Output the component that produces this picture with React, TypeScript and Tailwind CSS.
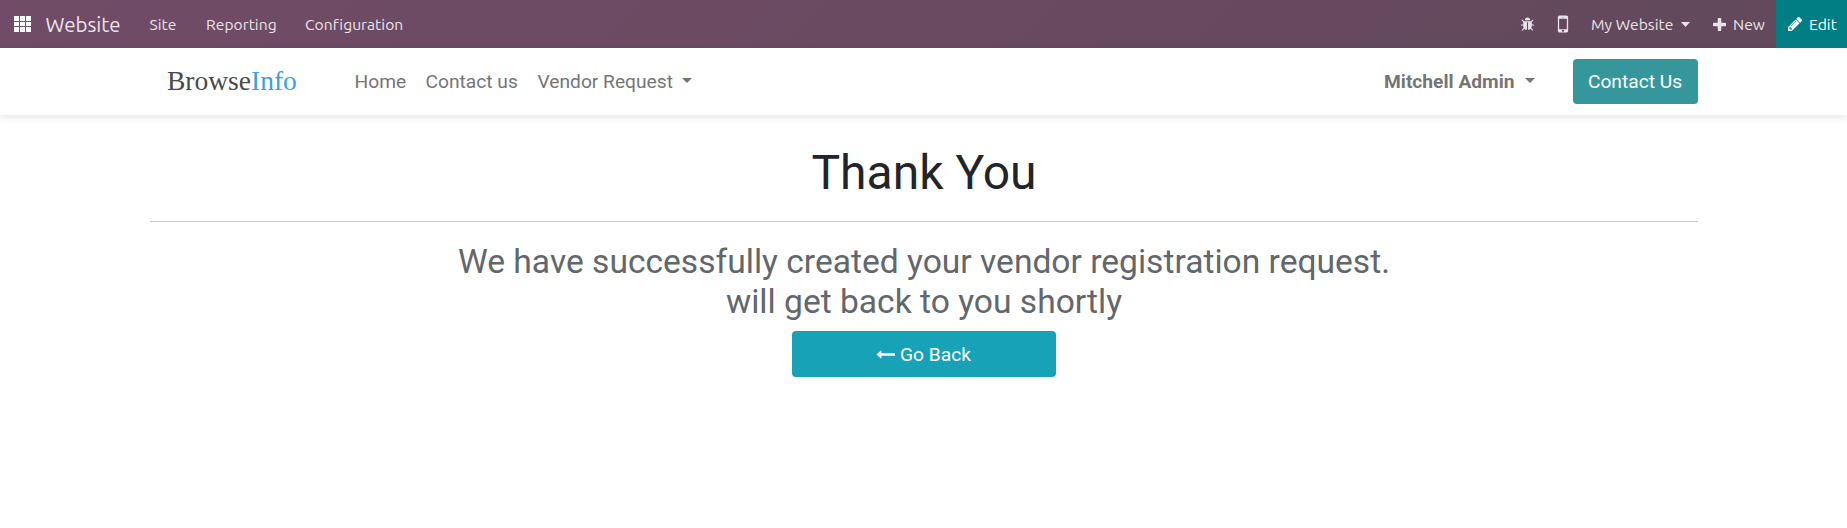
import React from "react";

const ICONS = {
  bug: "M1696 960q0 26-19 45t-45 19h-224q0 171-67 290l208 209q19 19 19 45t-19 45q-18 19-45 19t-45-19l-198-197q-5 5-15 13t-42 28.5-65 36.5-82 29-97 13v-896h-128v896q-51 0-101.5-13.5t-87-33-66-39-43.5-32.5l-15-14-183 207q-20 21-48 21-24 0-43-16-19-18-20.5-44.5t15.5-46.5l202-227q-58-114-58-274h-224q-26 0-45-19t-19-45 19-45 45-19h224v-294l-173-173q-19-19-19-45t19-45 45-19 45 19l173 173h844l173-173q19-19 45-19t45 19 19 45-19 45l-173 173v294h224q26 0 45 19t19 45zm-480-576h-640q0-133 93.5-226.5t226.5-93.5 226.5 93.5 93.5 226.5z",
  mobile: "M976 1408q0-33-23.5-56.5t-56.5-23.5-56.5 23.5-23.5 56.5 23.5 56.5 56.5 23.5 56.5-23.5 23.5-56.5zm208-160v-704q0-13-9.5-22.5t-22.5-9.5h-512q-13 0-22.5 9.5t-9.5 22.5v704q0 13 9.5 22.5t22.5 9.5h512q13 0 22.5-9.5t9.5-22.5zm-192-848q0-16-16-16h-160q-16 0-16 16t16 16h160q16 0 16-16zm288-16v1024q0 52-38 90t-90 38h-512q-52 0-90-38t-38-90v-1024q0-52 38-90t90-38h512q52 0 90 38t38 90z",
  plus: "M1600 736v192q0 40-28 68t-68 28h-416v416q0 40-28 68t-68 28h-192q-40 0-68-28t-28-68v-416h-416q-40 0-68-28t-28-68v-192q0-40 28-68t68-28h416v-416q0-40 28-68t68-28h192q40 0 68 28t28 68v416h416q40 0 68 28t28 68z",
  pencil: "M491 1536l91-91-235-235-91 91v107h128v128h107zm523-928q0-22-22-22-10 0-17 7l-542 542q-7 7-7 17 0 22 22 22 10 0 17-7l542-542q7-7 7-17zm-54-192l416 416-832 832h-416v-416zm683 96q0 53-37 90l-166 166-416-416 166-165q36-38 90-38 53 0 91 38l235 234q37 39 37 91z",
  arrow: "M1792 800v192q0 14-9 23t-23 9h-1248v224q0 21-19 29t-35-5l-384-350q-10-10-10-23 0-14 10-24l384-354q16-14 35-6 19 9 19 29v224h1248q14 0 23 9t9 23z",
};

function Icon({ name, className, viewBox = "0 0 1792 1792" }: { name: keyof typeof ICONS; className: string; viewBox?: string }) {
  return (
    <svg viewBox={viewBox} fill="currentColor" className={className} aria-hidden="true">
      <path d={ICONS[name]} />
    </svg>
  );
}

function Caret({ className }: { className: string }) {
  return (
    <svg viewBox="0 0 10 5" preserveAspectRatio="none" fill="currentColor" className={className} aria-hidden="true">
      <path d="M0 0h10L5 5z" />
    </svg>
  );
}

function SystemBar() {
  return (
    <nav className="flex h-12 items-center whitespace-nowrap bg-linear-[135deg,#714b67,#62495b] pl-[14px] font-['Ubuntu','Noto_Sans',sans-serif] text-[15.6px] tracking-[0.05px] text-[#eae4e9]">
      <div className="grid h-4 w-[17px] shrink-0 grid-cols-3 gap-px">
        {Array.from({ length: 9 }, (_, i) => (
          <span key={i} className="bg-white" />
        ))}
      </div>
      <a className="ml-[14.5px] w-[104px] pt-[2px] text-[20.5px] tracking-normal">Website</a>
      <a className="w-[56.5px] pt-px">Site</a>
      <a className="w-[99px] pt-px">Reporting</a>
      <a className="pt-px">Configuration</a>
      <div className="ml-auto flex h-full items-center">
        <Icon name="bug" className="mr-[16px] size-[15px]" />
        <Icon name="mobile" className="mr-[16px] size-6" />
        <a className="w-[90px] pt-px">My Website</a>
        <Caret className="mr-[23px] mt-px h-[5px] w-[9px]" />
        <Icon name="plus" viewBox="192 128 1408 1408" className="mr-[7px] size-[13px]" />
        <a className="w-[43px] pt-px">New</a>
        <a className="flex h-full w-[71px] items-center bg-[#017e84] pl-3 text-white">
          <Icon name="pencil" viewBox="128 149 1515 1515" className="mr-[7px] size-[14px]" />
          <span className="pt-px">Edit</span>
        </a>
      </div>
    </nav>
  );
}

function SiteHeader() {
  return (
    <header className="h-[67px] bg-white shadow-[0_2px_8px_rgba(0,0,0,0.11)]">
      <div className="mx-auto flex h-full w-[1548px] items-center whitespace-nowrap text-[19.2px] text-[#757575]">
        <a className="ml-[17.5px] w-[187.5px] pb-[2px] font-['Liberation_Serif',serif] text-[27.5px] text-[#4a4a4a]">
          Browse<span className="text-[#3a9fe5]">Info</span>
        </a>
        <a className="w-[71px] pt-[2px]">Home</a>
        <a className="w-[112px] pt-[2px]">Contact us</a>
        <a className="w-[144px] pt-[2px]">Vendor Request</a>
        <Caret className="mb-[2px] h-[5px] w-[10px]" />
        <div className="ml-auto flex items-center">
          <a className="w-[140.5px] pt-[2px] font-bold">Mitchell Admin</a>
          <Caret className="mb-[2px] mr-[38px] h-[5px] w-[10px]" />
          <a className="flex h-[45px] w-[125px] items-center justify-center rounded-[4px] bg-[#35979c] pt-[2px] text-white">Contact Us</a>
        </div>
      </div>
    </header>
  );
}

export default function App() {
  return (
    <div className="min-h-screen bg-white font-['Roboto',sans-serif]">
      <SystemBar />
      <SiteHeader />
      <main className="mx-auto flex w-[1548px] flex-col items-center pt-[29px] text-center">
        <h1 className="h-[77px] pl-px text-[48px] leading-[58px] text-[#212529]">Thank You</h1>
        <hr className="w-full border-t border-[#c8c9ca]" />
        <p className="mt-[20px] pl-px text-[33.6px] leading-[40px] text-[#62676b]">
          We have successfully created your vendor registration request.
          <br />
          will get back to you shortly
        </p>
        <a className="mt-[9px] flex h-[46px] w-[264px] items-center justify-center rounded-[4px] bg-[#18a2b8] text-[19.2px] text-white">
          <Icon name="arrow" className="mr-[5px] size-[19px]" />
          <span className="pt-[2px]">Go Back</span>
        </a>
      </main>
    </div>
  );
}
